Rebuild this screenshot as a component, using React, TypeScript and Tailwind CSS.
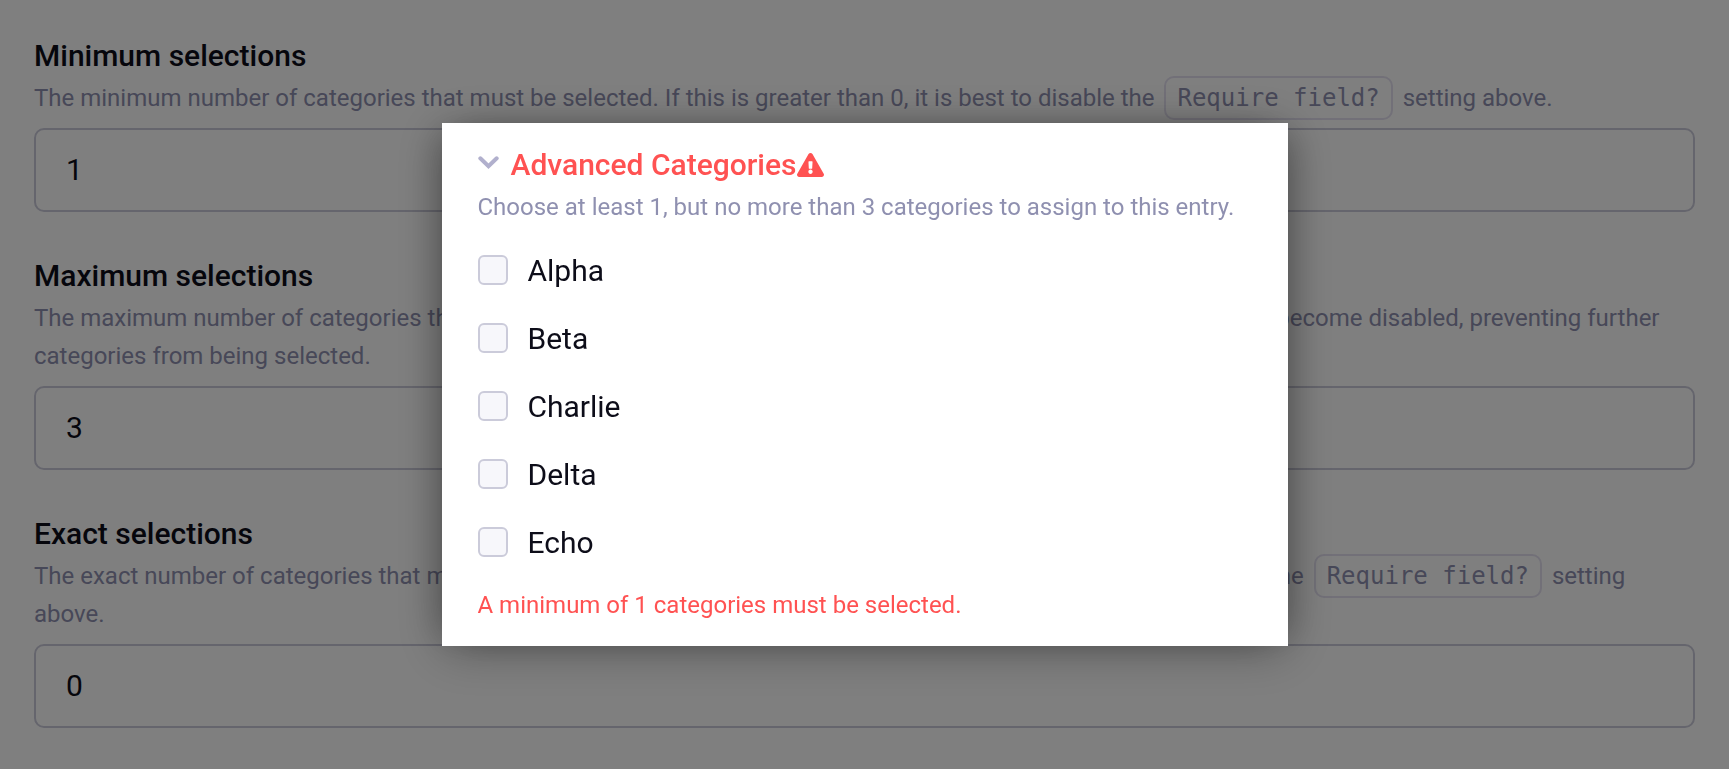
import { useState } from 'react';
import type { ReactNode } from 'react';
import { FaExclamationTriangle } from 'react-icons/fa';

type SettingField = {
    id: string;
    label: string;
    value: string;
    desc: ReactNode;
};

const Code = ({ children }: { children: ReactNode }) => (
    <code className="mx-1 rounded-[10px] border-2 border-[#e4e1f0] px-[11px] py-[6px] font-['DejaVu_Sans_Mono',monospace] text-[24px]">
        {children}
    </code>
);

const fields: SettingField[] = [
    {
        id: 'min_selections',
        label: 'Minimum selections',
        value: '1',
        desc: (
            <>
                The minimum number of categories that must be selected. If this is greater than 0, it is best to
                disable the <Code>Require field?</Code> setting above.
            </>
        ),
    },
    {
        id: 'max_selections',
        label: 'Maximum selections',
        value: '3',
        desc: 'The maximum number of categories that can be selected. Once the number is reached, the remaining categories will become disabled, preventing further categories from being selected.',
    },
    {
        id: 'exact_selections',
        label: 'Exact selections',
        value: '0',
        desc: (
            <>
                The exact number of categories that must be selected by the contributor. If this is greater than 0, it
                is best to disable the <Code>Require field?</Code> setting above.
            </>
        ),
    },
];

const categories = ['Alpha', 'Beta', 'Charlie', 'Delta', 'Echo'];

const Setting = ({ field }: { field: SettingField }) => (
    <div className="flex flex-col">
        <label htmlFor={field.id} className="text-[30px] leading-[46px] font-medium text-[#0d0d19]">
            {field.label}
        </label>
        <p id={`${field.id}_desc`} className="text-[24px] leading-[38px] text-[#8f90b0]">
            {field.desc}
        </p>
        <input
            id={field.id}
            type="text"
            inputMode="numeric"
            defaultValue={field.value}
            aria-describedby={`${field.id}_desc`}
            className="mt-[11px] h-[84px] w-full rounded-[10px] border-2 border-[#cbcbda] bg-white px-[30px] pb-[2px] text-[30px] text-[#0d0d19] outline-none"
        />
    </div>
);

const CategoryDialog = () => {
    const [open, setOpen] = useState(true);

    return (
        <div
            role="dialog"
            aria-labelledby="categories_title"
            className="w-full max-w-[846px] bg-white px-9 pt-[19px] pb-[22px] shadow-[0_6px_45px_rgba(0,0,0,0.27),14px_0_36px_-14px_rgba(0,0,0,0.25),-14px_0_36px_-14px_rgba(0,0,0,0.25)]">
            <h2 id="categories_title" className="text-[30px] leading-[46px] font-medium text-[#ff5252]">
                <button
                    type="button"
                    aria-expanded={open}
                    onClick={() => setOpen(!open)}
                    className="flex items-center">
                    <svg viewBox="0 0 21 13" className="mr-3 mb-[6px] h-[13px] w-[21px]" fill="none" aria-hidden="true">
                        <path d="M2.3 2.3l8.2 7.9 8.2-7.9" stroke="#b1b0cd" strokeWidth="4" strokeLinecap="round" />
                    </svg>
                    Advanced Categories
                    <FaExclamationTriangle className="h-6 w-[27px]" />
                </button>
            </h2>
            <p className="text-[24px] leading-[38px] text-[#8f90b0]">
                Choose at least 1, but no more than 3 categories to assign to this entry.
            </p>
            {open && (
                <ul className="mt-[10px] flex flex-col">
                    {categories.map(cat => (
                        <li key={cat}>
                            <label className="flex h-[68px] items-center gap-5 text-[30px] text-[#0d0d19]">
                                <input
                                    type="checkbox"
                                    className="size-[30px] appearance-none rounded-md border-2 border-[#cbcbda] bg-[#f7f7fb] checked:bg-[#5d63f1]"
                                />
                                {cat}
                            </label>
                        </li>
                    ))}
                </ul>
            )}
            <p className="mt-[10px] text-[24px] leading-[38px] text-[#ff5252]">
                A minimum of 1 categories must be selected.
            </p>
        </div>
    );
};

const App = () => {
    return (
        <div className="min-h-screen bg-white font-[Roboto,sans-serif]">
            <form className="flex flex-col gap-[41px] px-[34px] pt-[33px] pb-[41px]">
                {fields.map(f => (
                    <Setting key={f.id} field={f} />
                ))}
            </form>
            <div className="fixed inset-0 flex items-center justify-center bg-black/50">
                <CategoryDialog />
            </div>
        </div>
    );
};

export default App;
